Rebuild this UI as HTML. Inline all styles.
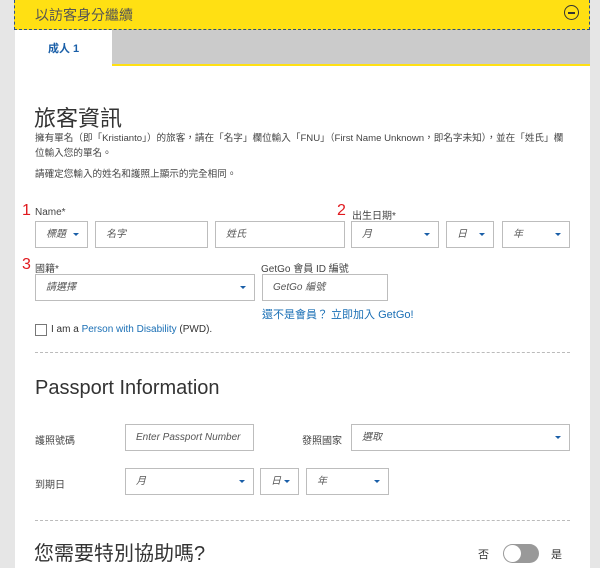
<!DOCTYPE html>
<html><head><meta charset="utf-8"><style>
*{margin:0;padding:0;box-sizing:border-box}
body{width:600px;height:568px;overflow:hidden;background:#e6e6e6;font-family:"Liberation Sans","Noto Sans CJK TC",sans-serif;color:#333;position:relative}
.a{position:absolute;white-space:nowrap}
.panel{position:absolute;left:15px;top:0;width:575px;height:568px;background:#fff}
.box{position:absolute;border:1px solid #bdbdbd;background:#fff;font-size:10px;font-style:italic;color:#555;padding-left:10px;line-height:25px}
.car{position:absolute;right:8px;top:11px;width:0;height:0;border-left:3px solid transparent;border-right:3px solid transparent;border-top:3px solid #1a5fa8}
.lbl{font-size:10px;color:#444}
.red{color:#e0191e;font-size:16px}
</style></head><body>
<div class="panel"></div>
<div class="a" style="left:14px;top:0;width:576px;height:30px;background:#ffe013;border:1px dashed #2a4f8a;border-top:none"></div>
<div class="a" style="left:35px;top:5px;font-size:14px;color:#555">以訪客身分繼續</div>
<div class="a" style="left:564px;top:5px;width:15px;height:15px;border:1.5px solid #333;border-radius:50%"></div>
<div class="a" style="left:568px;top:12px;width:7px;height:1.5px;background:#333"></div>
<div class="a" style="left:112px;top:30px;width:478px;height:34px;background:#cbcbcb"></div>
<div class="a" style="left:112px;top:64px;width:478px;height:2px;background:#ffe013"></div>
<div class="a" style="left:48px;top:40px;font-size:11px;font-weight:bold;color:#1a5fa8">成人 1</div>
<div class="a" style="left:34px;top:101px;font-size:22px;color:#333">旅客資訊</div>
<div class="a" style="left:35px;top:131px;font-size:9.6px;color:#444;line-height:15px">擁有單名（即「Kristianto」）的旅客，請在「名字」欄位輸入「FNU」（First Name Unknown，即名字未知），並在「姓氏」欄<br>位輸入您的單名。</div>
<div class="a" style="left:35px;top:166px;font-size:9.6px;color:#444">請確定您輸入的姓名和護照上顯示的完全相同。</div>
<div class="a red" style="left:22px;top:202px">1</div>
<div class="a lbl" style="left:35px;top:207px">Name*</div>
<div class="a red" style="left:337px;top:202px">2</div>
<div class="a lbl" style="left:352px;top:207px">出生日期*</div>
<div class="box" style="left:35px;top:221px;width:53px;height:27px">標題<i class="car"></i></div>
<div class="box" style="left:95px;top:221px;width:113px;height:27px">名字</div>
<div class="box" style="left:215px;top:221px;width:130px;height:27px">姓氏</div>
<div class="box" style="left:351px;top:221px;width:88px;height:27px">月<i class="car"></i></div>
<div class="box" style="left:446px;top:221px;width:48px;height:27px">日<i class="car"></i></div>
<div class="box" style="left:502px;top:221px;width:68px;height:27px">年<i class="car"></i></div>
<div class="a red" style="left:22px;top:256px">3</div>
<div class="a lbl" style="left:35px;top:260px">國籍*</div>
<div class="a lbl" style="left:261px;top:260px">GetGo 會員 ID 編號</div>
<div class="box" style="left:35px;top:274px;width:220px;height:27px">請選擇<i class="car"></i></div>
<div class="box" style="left:262px;top:274px;width:126px;height:27px">GetGo 編號</div>
<div class="a" style="left:262px;top:306px;font-size:11px;color:#1a6fb5">還不是會員？ 立即加入 GetGo!</div>
<div class="a" style="left:35px;top:324px;width:12px;height:12px;border:1px solid #777"></div>
<div class="a" style="left:51px;top:324px;font-size:10px;color:#333">I am a <span style="color:#1a6fb5">Person with Disability</span> (PWD).</div>
<div class="a" style="left:35px;top:352px;width:535px;border-top:1px dashed #bbb"></div>
<div class="a" style="left:35px;top:377px;font-size:20px;color:#333">Passport Information</div>
<div class="a lbl" style="left:35px;top:432px">護照號碼</div>
<div class="box" style="left:125px;top:424px;width:129px;height:27px">Enter Passport Number</div>
<div class="a lbl" style="left:302px;top:432px">發照國家</div>
<div class="box" style="left:351px;top:424px;width:219px;height:27px">選取<i class="car"></i></div>
<div class="a lbl" style="left:35px;top:476px">到期日</div>
<div class="box" style="left:125px;top:468px;width:129px;height:27px">月<i class="car"></i></div>
<div class="box" style="left:260px;top:468px;width:39px;height:27px">日<i class="car"></i></div>
<div class="box" style="left:306px;top:468px;width:83px;height:27px">年<i class="car"></i></div>
<div class="a" style="left:35px;top:520px;width:535px;border-top:1px dashed #bbb"></div>
<div class="a" style="left:34px;top:537px;font-size:20px;color:#333">您需要特別協助嗎?</div>
<div class="a" style="left:478px;top:546px;font-size:11px;color:#333">否</div>
<div class="a" style="left:503px;top:544px;width:36px;height:19px;background:#999;border-radius:10px"></div>
<div class="a" style="left:504px;top:545px;width:17px;height:17px;background:#fff;border-radius:50%"></div>
<div class="a" style="left:551px;top:546px;font-size:11px;color:#333">是</div>
</body></html>
